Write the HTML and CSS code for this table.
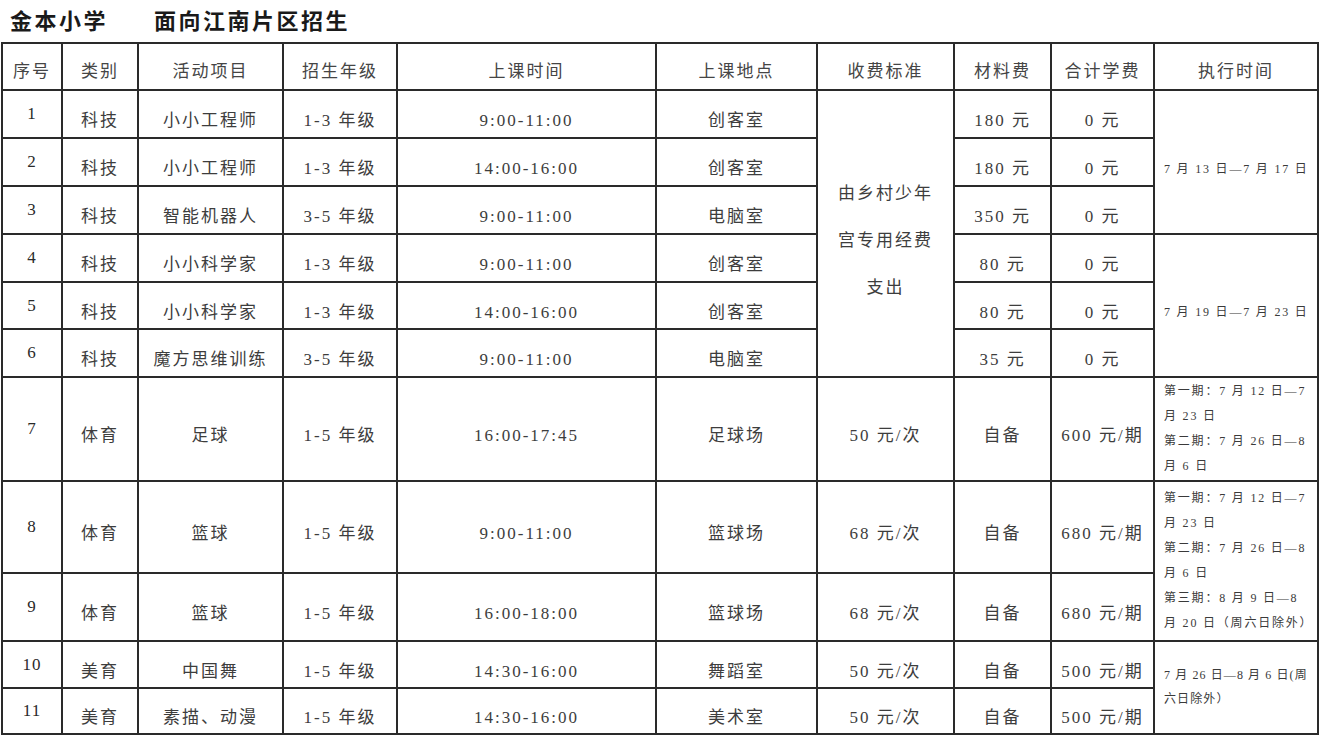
FILE: index.html
```html
<!DOCTYPE html>
<html lang="zh">
<head>
<meta charset="utf-8">
<title>金本小学 面向江南片区招生</title>
<link rel="stylesheet" href="styles.css">
</head>
<body>
<h1 class="title"><span>金本小学</span><span class="sub">面向江南片区招生</span></h1>
<table class="grid">
  <colgroup>
    <col class="c1"><col class="c2"><col class="c3"><col class="c4"><col class="c5">
    <col class="c6"><col class="c7"><col class="c8"><col class="c9"><col class="c10">
  </colgroup>
  <thead>
    <tr class="h-head">
      <th>序号</th><th>类别</th><th>活动项目</th><th>招生年级</th><th>上课时间</th>
      <th>上课地点</th><th>收费标准</th><th>材料费</th><th>合计学费</th><th>执行时间</th>
    </tr>
  </thead>
  <tbody>
    <tr class="h48">
      <td class="no">1</td><td>科技</td><td>小小工程师</td><td>1-3 年级</td><td>9:00-11:00</td><td>创客室</td>
      <td rowspan="6" class="fee">由乡村少年<br>宫专用经费<br>支出</td>
      <td>180 元</td><td>0 元</td>
      <td rowspan="3" class="ex ex-mid">7 月 13 日—7 月 17 日</td>
    </tr>
    <tr class="h48">
      <td class="no">2</td><td>科技</td><td>小小工程师</td><td>1-3 年级</td><td>14:00-16:00</td><td>创客室</td>
      <td>180 元</td><td>0 元</td>
    </tr>
    <tr class="h48">
      <td class="no">3</td><td>科技</td><td>智能机器人</td><td>3-5 年级</td><td>9:00-11:00</td><td>电脑室</td>
      <td>350 元</td><td>0 元</td>
    </tr>
    <tr class="h48">
      <td class="no">4</td><td>科技</td><td>小小科学家</td><td>1-3 年级</td><td>9:00-11:00</td><td>创客室</td>
      <td>80 元</td><td>0 元</td>
      <td rowspan="3" class="ex ex-mid">7 月 19 日—7 月 23 日</td>
    </tr>
    <tr class="h47">
      <td class="no">5</td><td>科技</td><td>小小科学家</td><td>1-3 年级</td><td>14:00-16:00</td><td>创客室</td>
      <td>80 元</td><td>0 元</td>
    </tr>
    <tr class="h48">
      <td class="no">6</td><td>科技</td><td>魔方思维训练</td><td>3-5 年级</td><td>9:00-11:00</td><td>电脑室</td>
      <td>35 元</td><td>0 元</td>
    </tr>
    <tr class="h104">
      <td class="no">7</td><td>体育</td><td>足球</td><td>1-5 年级</td><td>16:00-17:45</td><td>足球场</td>
      <td>50 元/次</td><td>自备</td><td>600 元/期</td>
      <td class="ex">第一期：7 月 12 日—7<br>月 23 日<br>第二期：7 月 26 日—8<br>月 6 日</td>
    </tr>
    <tr class="h92">
      <td class="no">8</td><td>体育</td><td>篮球</td><td>1-5 年级</td><td>9:00-11:00</td><td>篮球场</td>
      <td>68 元/次</td><td>自备</td><td>680 元/期</td>
      <td rowspan="2" class="ex">第一期：7 月 12 日—7<br>月 23 日<br>第二期：7 月 26 日—8<br>月 6 日<br>第三期：8 月 9 日—8<br>月 20 日（周六日除外）</td>
    </tr>
    <tr class="h68">
      <td class="no">9</td><td>体育</td><td>篮球</td><td>1-5 年级</td><td>16:00-18:00</td><td>篮球场</td>
      <td>68 元/次</td><td>自备</td><td>680 元/期</td>
    </tr>
    <tr class="h47">
      <td class="no">10</td><td>美育</td><td>中国舞</td><td>1-5 年级</td><td>14:30-16:00</td><td>舞蹈室</td>
      <td>50 元/次</td><td>自备</td><td>500 元/期</td>
      <td rowspan="2" class="ex ex-end">7 月 26 日—8 月 6 日(周<br>六日除外）</td>
    </tr>
    <tr class="h46">
      <td class="no">11</td><td>美育</td><td>素描、动漫</td><td>1-5 年级</td><td>14:30-16:00</td><td>美术室</td>
      <td>50 元/次</td><td>自备</td><td>500 元/期</td>
    </tr>
  </tbody>
</table>
</body>
</html>
```

FILE: styles.css
```css
html, body {
  margin: 0;
  padding: 0;
  background: #ffffff;
}

body {
  font-family: "Liberation Serif", "Noto Sans CJK SC", serif;
  color: #3a3a3a;
}

.title {
  margin: 0;
  height: 42px;
  padding: 0 0 4px 10px;
  display: flex;
  align-items: center;
  gap: 46px;
  font-family: "Noto Sans CJK SC", sans-serif;
  font-size: 22px;
  font-weight: 700;
  letter-spacing: 2.5px;
  color: #1a1a1a;
  line-height: 1;
  box-sizing: border-box;
}

.grid {
  border-collapse: collapse;
  table-layout: fixed;
  width: 1317px;
  margin-left: 1px;
}

.c1 { width: 60px; }
.c2 { width: 76px; }
.c3 { width: 145px; }
.c4 { width: 114px; }
.c5 { width: 259px; }
.c6 { width: 161px; }
.c7 { width: 137px; }
.c8 { width: 97px; }
.c9 { width: 103px; }
.c10 { width: 164px; }

.grid th,
.grid td {
  border: 2px solid #2a2a2a;
  text-align: center;
  vertical-align: middle;
  padding: 14px 0 0 0;
  font-size: 17px;
  font-weight: 400;
  letter-spacing: 2px;
  white-space: nowrap;
  line-height: 20px;
  color: #3d3d3d;
  overflow: hidden;
}

.grid th {
  padding-top: 10px;
  color: #454545;
}

.grid td.no {
  padding-top: 0;
  letter-spacing: 1px;
  color: #2a2a2a;
}

.grid td.fee {
  line-height: 47px;
  padding-top: 14px;
}

.grid td.ex {
  text-align: left;
  padding: 0 0 0 9px;
  font-size: 12px;
  letter-spacing: 1.8px;
  line-height: 25px;
  color: #3a3a3a;
}

.grid td.ex-mid {
  padding-top: 14px;
}

.grid td.ex-end {
  padding: 0 0 2px 9px;
  line-height: 24px;
  letter-spacing: 1.1px;
}

.h-head { height: 47px; }
.h48 { height: 48px; }
.h47 { height: 47px; }
.h46 { height: 46px; }
.h104 { height: 104px; }
.h92 { height: 92px; }
.h68 { height: 68px; }
```
